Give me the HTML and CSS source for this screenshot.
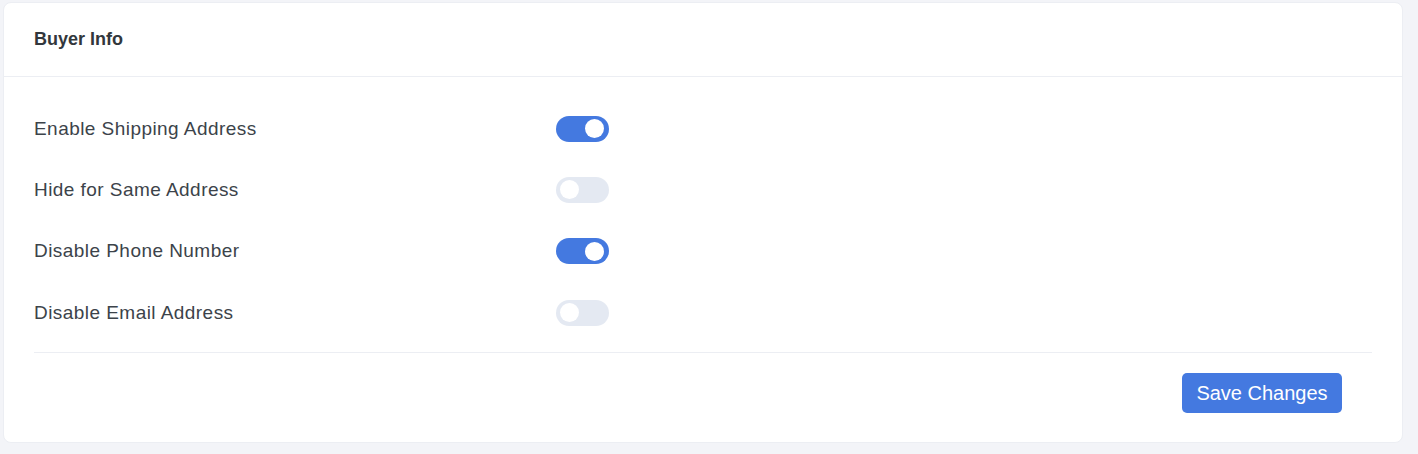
FILE: index.html
```html
<!DOCTYPE html>
<html lang="en">
<head>
    <meta charset="UTF-8">
    <meta name="viewport" content="width=device-width, initial-scale=1.0">
    <title>Buyer Info</title>
    <link rel="stylesheet" href="styles.css">
</head>
<body>

    <div class="settings-card">
        <div class="card-header">Buyer Info</div>

        <div class="card-body">
            <div class="setting-row">
                <span class="setting-label">Enable Shipping Address</span>
                <label class="switch"><input type="checkbox" checked><span class="slider"></span></label>
            </div>
            <div class="setting-row">
                <span class="setting-label">Hide for Same Address</span>
                <label class="switch"><input type="checkbox"><span class="slider"></span></label>
            </div>
            <div class="setting-row">
                <span class="setting-label">Disable Phone Number</span>
                <label class="switch"><input type="checkbox" checked><span class="slider"></span></label>
            </div>
            <div class="setting-row">
                <span class="setting-label">Disable Email Address</span>
                <label class="switch"><input type="checkbox"><span class="slider"></span></label>
            </div>

            <div class="card-footer">
                <button class="save-btn">Save Changes</button>
            </div>
        </div>
    </div>

</body>
</html>
```

FILE: styles.css
```css
body {
    font-family: 'Liberation Sans', Arial, sans-serif;
    background: #f3f4f8;
    color: #3c434a;
    margin: 0;
    padding: 2px 15px 0 3px;
}

.settings-card {
    background-color: #fff;
    border: 1px solid #eceef3;
    border-radius: 8px;
    height: 441px;
    box-sizing: border-box;
}

.card-header {
    height: 73px;
    padding: 0 30px;
    display: flex;
    align-items: center;
    font-size: 18px;
    font-weight: bold;
    color: #32373c;
    border-bottom: 1px solid #eceef3;
}

.card-body {
    padding: 21px 30px 0;
}

.setting-row {
    display: flex;
    align-items: center;
    height: 61.3px;
}

.setting-label {
    width: 522px;
    font-size: 19px;
    letter-spacing: 0.45px;
}

.switch {
    position: relative;
    display: inline-block;
    width: 53px;
    height: 26px;
}

.switch input {
    display: none;
}

.slider {
    position: absolute;
    inset: 0;
    background-color: #e4e9f2;
    border-radius: 13px;
    cursor: pointer;
}

.slider::before {
    content: "";
    position: absolute;
    width: 19px;
    height: 19px;
    left: 4px;
    top: 3.5px;
    background: #fff;
    border-radius: 50%;
}

.switch input:checked + .slider {
    background-color: #4479e0;
}

.switch input:checked + .slider::before {
    left: 29px;
}

.card-footer {
    margin-top: 9px;
    border-top: 1px solid #eceef3;
    padding: 20px 30px 0 0;
    display: flex;
    justify-content: flex-end;
}

.save-btn {
    background-color: #4479e0;
    color: #fff;
    font-family: inherit;
    font-size: 20px;
    width: 160px;
    height: 40px;
    border: none;
    border-radius: 5px;
    cursor: pointer;
}
```
